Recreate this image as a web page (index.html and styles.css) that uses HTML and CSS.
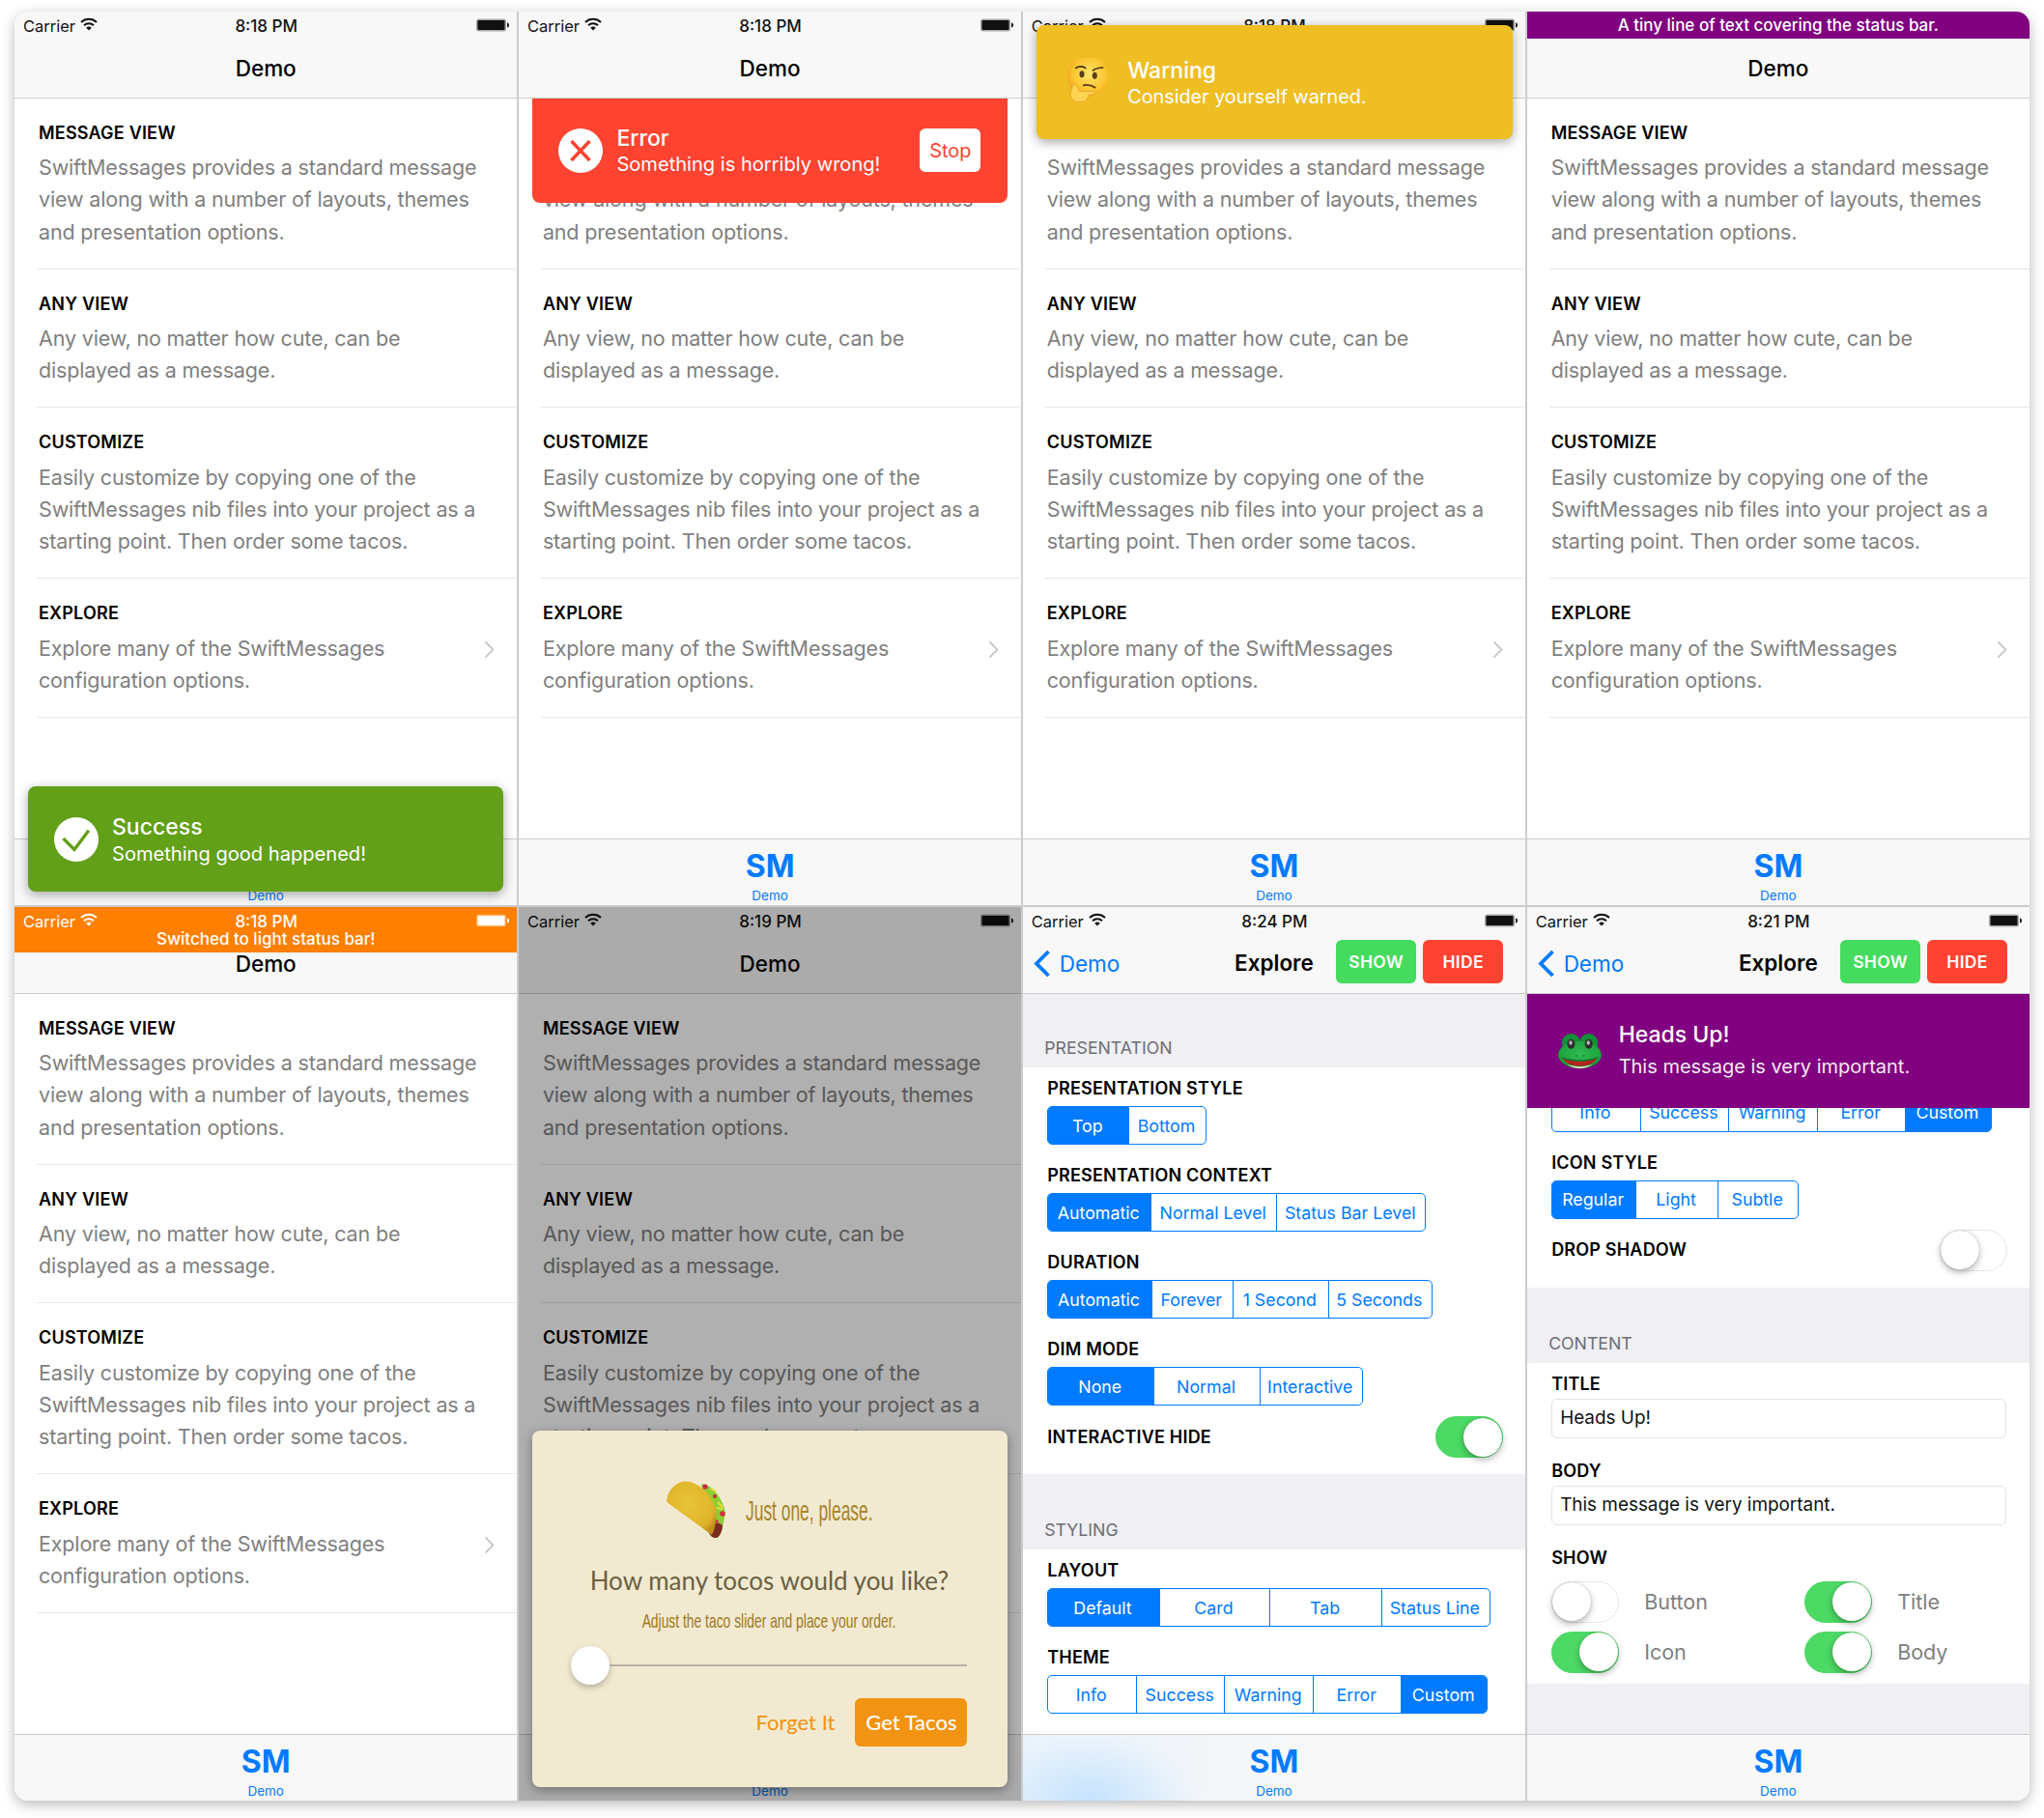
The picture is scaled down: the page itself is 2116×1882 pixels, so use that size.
FILE: index.html
```html
<!DOCTYPE html>
<html lang="en">
<head>
  <meta charset="UTF-8">
  <title>SwiftMessages</title>
  <link rel="stylesheet" href="styles.css">
</head>
<body>
  <svg class="defs" width="0" height="0">
    <symbol id="wifi" viewBox="0 0 18 14">
      <path d="M1 5a11.600 11.600 0 0 1 16 0" fill="none" stroke="currentColor" stroke-width="2"/>
      <path d="M4 8.200a7.400 7.400 0 0 1 10 0" fill="none" stroke="currentColor" stroke-width="2"/>
      <path d="M9 13.600 6.200 10.800a4 4 0 0 1 5.600 0z" fill="currentColor"/>
    </symbol>
    <symbol id="battery" viewBox="0 0 34 14">
      <rect x="0" y="0.500" width="31" height="13" rx="2.500" fill="currentColor" opacity=".35"/>
      <rect x="1.500" y="2" width="28" height="10" rx="1" fill="currentColor"/>
      <path d="M32 4.500c1.200 0 2 1 2 2.500s-.8 2.500-2 2.500z" fill="currentColor"/>
    </symbol>
    <symbol id="chevron" viewBox="0 0 11 19">
      <path d="M1.500 1.500 9.500 9.500l-8 8" fill="none" stroke="currentColor" stroke-width="1.800"/>
    </symbol>
    <symbol id="back" viewBox="0 0 18 29">
      <path d="M15.500 2 3 14.500 15.500 27" fill="none" stroke="currentColor" stroke-width="3.800"/>
    </symbol>
  </svg>

  <div class="window">

    <!-- success toast -->
    <article class="phone">
      <header class="status">
        <div class="status-left">Carrier <svg class="wifi"><use href="#wifi"/></svg></div>
        <div class="status-time">8:18 PM</div>
        <div class="status-right"><svg class="battery"><use href="#battery"/></svg></div>
      </header>
      <nav class="nav"><span class="nav-title">Demo</span></nav>
      <main class="home">
        <section class="row"><div><h3 class="row-title">MESSAGE VIEW</h3><p class="row-text">SwiftMessages provides a standard message<br>view along with a number of layouts, themes<br>and presentation options.</p></div></section>
        <section class="row"><div><h3 class="row-title">ANY VIEW</h3><p class="row-text">Any view, no matter how cute, can be<br>displayed as a message.</p></div></section>
        <section class="row"><div><h3 class="row-title">CUSTOMIZE</h3><p class="row-text">Easily customize by copying one of the<br>SwiftMessages nib files into your project as a<br>starting point. Then order some tacos.</p></div></section>
        <section class="row"><div><h3 class="row-title">EXPLORE</h3><p class="row-text">Explore many of the SwiftMessages<br>configuration options.</p></div><svg class="chevron"><use href="#chevron"/></svg></section>
      </main>
      <footer class="tab"><span class="tab-logo">SM</span><span class="tab-label">Demo</span></footer>
      <div class="toast toast-success">
        <svg class="toast-icon" viewBox="0 0 46 46"><circle cx="23" cy="23" r="23" fill="#fff"/><path d="M9.500 22 21 33.500 35.800 13.700" fill="none" stroke="#62a018" stroke-width="3.400"/></svg>
        <div><div class="toast-title">Success</div><div class="toast-body">Something good happened!</div></div>
      </div>
    </article>

    <!-- error toast -->
    <article class="phone">
      <header class="status">
        <div class="status-left">Carrier <svg class="wifi"><use href="#wifi"/></svg></div>
        <div class="status-time">8:18 PM</div>
        <div class="status-right"><svg class="battery"><use href="#battery"/></svg></div>
      </header>
      <nav class="nav"><span class="nav-title">Demo</span></nav>
      <main class="home">
        <section class="row"><div><h3 class="row-title">MESSAGE VIEW</h3><p class="row-text">SwiftMessages provides a standard message<br>view along with a number of layouts, themes<br>and presentation options.</p></div></section>
        <section class="row"><div><h3 class="row-title">ANY VIEW</h3><p class="row-text">Any view, no matter how cute, can be<br>displayed as a message.</p></div></section>
        <section class="row"><div><h3 class="row-title">CUSTOMIZE</h3><p class="row-text">Easily customize by copying one of the<br>SwiftMessages nib files into your project as a<br>starting point. Then order some tacos.</p></div></section>
        <section class="row"><div><h3 class="row-title">EXPLORE</h3><p class="row-text">Explore many of the SwiftMessages<br>configuration options.</p></div><svg class="chevron"><use href="#chevron"/></svg></section>
      </main>
      <footer class="tab"><span class="tab-logo">SM</span><span class="tab-label">Demo</span></footer>
      <div class="toast toast-error">
        <svg class="toast-icon" viewBox="0 0 46 46"><circle cx="23" cy="23" r="23" fill="#fff"/><path d="M13.500 13 32.500 33M32.500 13 13.500 33" fill="none" stroke="#fe4331" stroke-width="3.600"/></svg>
        <div class="toast-text"><div class="toast-title">Error</div><div class="toast-body">Something is horribly wrong!</div></div>
        <button class="toast-btn">Stop</button>
      </div>
    </article>

    <!-- warning toast -->
    <article class="phone">
      <header class="status">
        <div class="status-left">Carrier <svg class="wifi"><use href="#wifi"/></svg></div>
        <div class="status-time">8:18 PM</div>
        <div class="status-right"><svg class="battery"><use href="#battery"/></svg></div>
      </header>
      <nav class="nav"><span class="nav-title">Demo</span></nav>
      <main class="home">
        <section class="row"><div><h3 class="row-title">MESSAGE VIEW</h3><p class="row-text">SwiftMessages provides a standard message<br>view along with a number of layouts, themes<br>and presentation options.</p></div></section>
        <section class="row"><div><h3 class="row-title">ANY VIEW</h3><p class="row-text">Any view, no matter how cute, can be<br>displayed as a message.</p></div></section>
        <section class="row"><div><h3 class="row-title">CUSTOMIZE</h3><p class="row-text">Easily customize by copying one of the<br>SwiftMessages nib files into your project as a<br>starting point. Then order some tacos.</p></div></section>
        <section class="row"><div><h3 class="row-title">EXPLORE</h3><p class="row-text">Explore many of the SwiftMessages<br>configuration options.</p></div><svg class="chevron"><use href="#chevron"/></svg></section>
      </main>
      <footer class="tab"><span class="tab-logo">SM</span><span class="tab-label">Demo</span></footer>
      <div class="toast toast-warning">
        <svg class="emoji-think" viewBox="0 0 42 46">
          <defs><radialGradient id="faceFill" cx=".55" cy=".45" r=".6"><stop offset="0" stop-color="#ffe46a"/><stop offset=".7" stop-color="#fbc52f"/><stop offset="1" stop-color="#f4a020"/></radialGradient></defs>
          <circle cx="20.800" cy="19" r="20.800" fill="url(#faceFill)"/>
          <ellipse cx="15" cy="16.700" rx="2.500" ry="3.500" fill="#5a3d1e"/>
          <ellipse cx="28.300" cy="18.300" rx="2.500" ry="3.500" fill="#5a3d1e"/>
          <path d="M8.300 11C10 8.800 16 7.500 19.300 11M26 13.300c2-1.800 7-3.300 11.300-3.300" fill="none" stroke="#4a3318" stroke-width="1.700"/>
          <path d="M16 28.300c4.500-.8 10 .4 13.300 2.700" fill="none" stroke="#5a3d1e" stroke-width="1.800"/>
          <path d="M5.500 28c1.500-1.500 3.500-1 4.500 1l2.500 5.500h14c2 0 2.500 2.500.5 3L21 39c1 1 .5 3-1 3 0 2-1 3-2.500 3C12 46.500 4 46 3 39c-.5-3 2-6 2.500-11z" fill="#ffd452" stroke="#eb9a22" stroke-width=".8"/>
        </svg>
        <div><div class="toast-title">Warning</div><div class="toast-body">Consider yourself warned.</div></div>
      </div>
    </article>

    <!-- status line -->
    <article class="phone">
      <header class="status-line">A tiny line of text covering the status bar.</header>
      <nav class="nav"><span class="nav-title">Demo</span></nav>
      <main class="home">
        <section class="row"><div><h3 class="row-title">MESSAGE VIEW</h3><p class="row-text">SwiftMessages provides a standard message<br>view along with a number of layouts, themes<br>and presentation options.</p></div></section>
        <section class="row"><div><h3 class="row-title">ANY VIEW</h3><p class="row-text">Any view, no matter how cute, can be<br>displayed as a message.</p></div></section>
        <section class="row"><div><h3 class="row-title">CUSTOMIZE</h3><p class="row-text">Easily customize by copying one of the<br>SwiftMessages nib files into your project as a<br>starting point. Then order some tacos.</p></div></section>
        <section class="row"><div><h3 class="row-title">EXPLORE</h3><p class="row-text">Explore many of the SwiftMessages<br>configuration options.</p></div><svg class="chevron"><use href="#chevron"/></svg></section>
      </main>
      <footer class="tab"><span class="tab-logo">SM</span><span class="tab-label">Demo</span></footer>
    </article>

    <!-- light status bar -->
    <article class="phone">
      <div class="light-bar">
        <header class="status">
          <div class="status-left">Carrier <svg class="wifi"><use href="#wifi"/></svg></div>
          <div class="status-time">8:18 PM</div>
          <div class="status-right"><svg class="battery"><use href="#battery"/></svg></div>
        </header>
        <div class="light-text">Switched to light status bar!</div>
      </div>
      <nav class="nav nav-short"><span class="nav-title">Demo</span></nav>
      <main class="home">
        <section class="row"><div><h3 class="row-title">MESSAGE VIEW</h3><p class="row-text">SwiftMessages provides a standard message<br>view along with a number of layouts, themes<br>and presentation options.</p></div></section>
        <section class="row"><div><h3 class="row-title">ANY VIEW</h3><p class="row-text">Any view, no matter how cute, can be<br>displayed as a message.</p></div></section>
        <section class="row"><div><h3 class="row-title">CUSTOMIZE</h3><p class="row-text">Easily customize by copying one of the<br>SwiftMessages nib files into your project as a<br>starting point. Then order some tacos.</p></div></section>
        <section class="row"><div><h3 class="row-title">EXPLORE</h3><p class="row-text">Explore many of the SwiftMessages<br>configuration options.</p></div><svg class="chevron"><use href="#chevron"/></svg></section>
      </main>
      <footer class="tab"><span class="tab-logo">SM</span><span class="tab-label">Demo</span></footer>
    </article>

    <!-- dimmed taco dialog -->
    <article class="phone">
      <header class="status">
        <div class="status-left">Carrier <svg class="wifi"><use href="#wifi"/></svg></div>
        <div class="status-time">8:19 PM</div>
        <div class="status-right"><svg class="battery"><use href="#battery"/></svg></div>
      </header>
      <nav class="nav"><span class="nav-title">Demo</span></nav>
      <main class="home">
        <section class="row"><div><h3 class="row-title">MESSAGE VIEW</h3><p class="row-text">SwiftMessages provides a standard message<br>view along with a number of layouts, themes<br>and presentation options.</p></div></section>
        <section class="row"><div><h3 class="row-title">ANY VIEW</h3><p class="row-text">Any view, no matter how cute, can be<br>displayed as a message.</p></div></section>
        <section class="row"><div><h3 class="row-title">CUSTOMIZE</h3><p class="row-text">Easily customize by copying one of the<br>SwiftMessages nib files into your project as a<br>starting point. Then order some tacos.</p></div></section>
        <section class="row"><div><h3 class="row-title">EXPLORE</h3><p class="row-text">Explore many of the SwiftMessages<br>configuration options.</p></div><svg class="chevron"><use href="#chevron"/></svg></section>
      </main>
      <footer class="tab"><span class="tab-logo">SM</span><span class="tab-label">Demo</span></footer>
      <div class="dim"></div>
      <div class="dialog">
        <div class="dialog-head">
          <svg class="taco" viewBox="0 0 61 60">
            <defs><radialGradient id="shellFill" cx=".45" cy=".4" r=".65"><stop offset="0" stop-color="#e9c438"/><stop offset=".8" stop-color="#deb32a"/><stop offset="1" stop-color="#c18f1c"/></radialGradient></defs>
            <path d="M36 3c8 1 14 6 18 13 4 6 7 13 6.500 19-.5 5-2 10-2.500 13-1 5-4 11-7 11-2 0-5-2-6-5z" fill="#8ccf35"/>
            <path d="M50 44c3-1 6 0 8 2 0 5-3 13-7 13-3 0-6-2-7-5z" fill="#7a2e20"/>
            <circle cx="40" cy="6" r="2.600" fill="#c8283a"/>
            <circle cx="50" cy="16" r="2" fill="#c8283a"/>
            <circle cx="58" cy="34" r="2.800" fill="#d62d3d"/>
            <circle cx="52" cy="42" r="1.800" fill="#d62d3d"/>
            <path d="M45 8l6 3M53 22l5 5M52 28l6 1" stroke="#f0d93a" stroke-width="1.800"/>
            <path d="M.3 19C2 9 10 1 19 .5 32 0 48 14 51 30c1 8 0 18-4 26L3 24c-2-1-3-3-2.700-5z" fill="url(#shellFill)"/>
          </svg>
          <span class="dialog-tag"><span class="dialog-tag-text">Just one, please.</span></span>
        </div>
        <h2 class="dialog-question">How many tocos would you like?</h2>
        <p class="dialog-hint">Adjust the taco slider and place your order.</p>
        <div class="slider"><span class="slider-thumb"></span><span class="slider-track"></span></div>
        <div class="dialog-actions"><span class="dialog-skip">Forget It</span><button class="dialog-go">Get Tacos</button></div>
      </div>
    </article>

    <!-- explore, top of the form -->
    <article class="phone">
      <header class="status">
        <div class="status-left">Carrier <svg class="wifi"><use href="#wifi"/></svg></div>
        <div class="status-time">8:24 PM</div>
        <div class="status-right"><svg class="battery"><use href="#battery"/></svg></div>
      </header>
      <nav class="nav nav-explore">
        <a class="nav-back"><svg class="back"><use href="#back"/></svg>Demo</a>
        <span class="nav-title nav-title-center">Explore</span>
        <div class="nav-actions"><button class="nav-btn nav-show">SHOW</button><button class="nav-btn nav-hide">HIDE</button></div>
      </nav>
      <main class="form">
        <h4 class="form-section">PRESENTATION</h4>
        <div class="form-group">
          <div class="field"><h3 class="field-label">PRESENTATION STYLE</h3>
            <div class="seg seg-style"><span class="seg-on">Top</span><span>Bottom</span></div></div>
          <div class="field"><h3 class="field-label">PRESENTATION CONTEXT</h3>
            <div class="seg seg-context"><span class="seg-on">Automatic</span><span>Normal Level</span><span>Status Bar Level</span></div></div>
          <div class="field"><h3 class="field-label">DURATION</h3>
            <div class="seg seg-duration"><span class="seg-on">Automatic</span><span>Forever</span><span>1 Second</span><span>5 Seconds</span></div></div>
          <div class="field field-tight"><h3 class="field-label">DIM MODE</h3>
            <div class="seg seg-dim"><span class="seg-on">None</span><span>Normal</span><span>Interactive</span></div></div>
          <div class="toggle-row"><h3 class="field-label">INTERACTIVE HIDE</h3><span class="switch switch-on"><i></i></span></div>
        </div>
        <h4 class="form-section form-section-next">STYLING</h4>
        <div class="form-group form-group-fill">
          <div class="field"><h3 class="field-label">LAYOUT</h3>
            <div class="seg seg-layout"><span class="seg-on">Default</span><span>Card</span><span>Tab</span><span>Status Line</span></div></div>
          <div class="field"><h3 class="field-label">THEME</h3>
            <div class="seg seg-theme"><span>Info</span><span>Success</span><span>Warning</span><span>Error</span><span class="seg-on">Custom</span></div></div>
        </div>
      </main>
      <footer class="tab tab-glow"><span class="tab-logo">SM</span><span class="tab-label">Demo</span></footer>
    </article>

    <!-- explore, scrolled, custom message -->
    <article class="phone">
      <header class="status">
        <div class="status-left">Carrier <svg class="wifi"><use href="#wifi"/></svg></div>
        <div class="status-time">8:21 PM</div>
        <div class="status-right"><svg class="battery"><use href="#battery"/></svg></div>
      </header>
      <nav class="nav nav-explore">
        <a class="nav-back"><svg class="back"><use href="#back"/></svg>Demo</a>
        <span class="nav-title nav-title-center">Explore</span>
        <div class="nav-actions"><button class="nav-btn nav-show">SHOW</button><button class="nav-btn nav-hide">HIDE</button></div>
      </nav>
      <main class="form">
        <div class="form-group form-group-scrolled">
          <div class="field"><div class="seg seg-theme-2"><span>Info</span><span>Success</span><span>Warning</span><span>Error</span><span class="seg-on">Custom</span></div></div>
          <div class="field field-tight"><h3 class="field-label">ICON STYLE</h3>
            <div class="seg seg-icon"><span class="seg-on">Regular</span><span>Light</span><span>Subtle</span></div></div>
          <div class="toggle-row"><h3 class="field-label">DROP SHADOW</h3><span class="switch"><i></i></span></div>
        </div>
        <h4 class="form-section form-section-next">CONTENT</h4>
        <div class="form-group form-group-content">
          <div class="field-input"><h3 class="field-label">TITLE</h3><div class="input">Heads Up!</div></div>
          <div class="field-input"><h3 class="field-label">BODY</h3><div class="input">This message is very important.</div></div>
          <h3 class="field-label field-label-show">SHOW</h3>
          <div class="toggle-grid">
            <div class="toggle"><span class="switch"><i></i></span>Button</div>
            <div class="toggle"><span class="switch switch-on"><i></i></span>Title</div>
            <div class="toggle"><span class="switch switch-on"><i></i></span>Icon</div>
            <div class="toggle"><span class="switch switch-on"><i></i></span>Body</div>
          </div>
        </div>
      </main>
      <footer class="tab"><span class="tab-logo">SM</span><span class="tab-label">Demo</span></footer>
      <div class="toast toast-custom">
        <svg class="emoji-frog" viewBox="0 0 45 36">
          <defs><radialGradient id="frogFill" cx=".5" cy=".45" r=".6"><stop offset="0" stop-color="#32bb52"/><stop offset=".75" stop-color="#1da53e"/><stop offset="1" stop-color="#0d7a30"/></radialGradient></defs>
          <circle cx="13.400" cy="9.500" r="9.500" fill="#129036"/>
          <circle cx="31.700" cy="9.500" r="9.500" fill="#129036"/>
          <ellipse cx="22.500" cy="22" rx="22.500" ry="14" fill="url(#frogFill)"/>
          <ellipse cx="13.400" cy="10.700" rx="4" ry="5" fill="#2e2e2e"/>
          <ellipse cx="31.700" cy="10.700" rx="4" ry="5" fill="#2e2e2e"/>
          <ellipse cx="13" cy="9.500" rx="1.700" ry="2.200" fill="#b5b5b5"/>
          <ellipse cx="31.300" cy="9.500" rx="1.700" ry="2.200" fill="#b5b5b5"/>
          <circle cx="19" cy="23" r=".8" fill="#0a6a28"/>
          <circle cx="26.500" cy="23" r=".8" fill="#0a6a28"/>
          <path d="M5 26c11 3.500 24 3.500 35 0-3 5-9 7.500-17.500 7.500S8 31 5 26z" fill="#b3231c"/>
          <path d="M4 25c12 4 25 4 37 0" fill="none" stroke="#0a5a22" stroke-width="1"/>
          <path d="M9 31.500c8 3.500 19 3.500 27 0-4 3-9 4.500-13.500 4.500S13 34.500 9 31.500z" fill="#dfe8c0"/>
        </svg>
        <div><div class="toast-title">Heads Up!</div><div class="toast-body">This message is very important.</div></div>
      </div>
    </article>

  </div>
</body>
</html>
```

FILE: styles.css
```css
* {
  box-sizing: border-box;
}

html, body {
  margin: 0;
  height: 100%;
  background: #fff;
}

body {
  padding: 12px 15px 18px;
  font-family: Inter, "Noto Sans", sans-serif;
  overflow: hidden;
}

h2, h3, h4, p {
  margin: 0;
}

button {
  font-family: inherit;
  border: none;
  padding: 0;
}

.defs {
  position: absolute;
}

.window {
  display: grid;
  grid-template-columns: repeat(4, 1fr);
  grid-template-rows: repeat(2, 925px);
  gap: 2px 1.5px;
  background: #ccc;
  border-radius: 14px;
  overflow: hidden;
  box-shadow: 0 4px 14px rgba(0, 0, 0, 0.28);
}

.phone {
  position: relative;
  display: flex;
  flex-direction: column;
  min-width: 0;
  background: #fff;
  overflow: hidden;
}

/* status bar */
.status {
  display: grid;
  grid-template-columns: 1fr auto 1fr;
  align-items: center;
  height: 28px;
  flex: none;
  padding: 1px 8px 0 9px;
  font-size: 17px;
  color: #111;
  background: #f8f8f8;
}

.status-left {
  display: flex;
  align-items: center;
  gap: 5px;
  font-size: 16.5px;
}

.status-time {
  font-weight: 500;
}

.status-right {
  display: flex;
  justify-content: flex-end;
}

.wifi {
  width: 18px;
  height: 14px;
  margin-top: -4px;
}

.battery {
  width: 34px;
  height: 14px;
  margin-top: -1px;
}

.status-line {
  height: 28px;
  flex: none;
  line-height: 29px;
  text-align: center;
  font-size: 17px;
  font-weight: 500;
  color: #fff;
  background: #800080;
}

.light-bar {
  height: 47px;
  flex: none;
  background: #ff7f00;
}

.light-bar .status {
  background: transparent;
  color: #fff;
}

.light-text {
  margin-top: -4px;
  line-height: 19px;
  text-align: center;
  font-size: 17px;
  font-weight: 500;
  color: #fff;
}

/* nav bar */
.nav {
  display: flex;
  align-items: center;
  justify-content: center;
  height: 61.5px;
  flex: none;
  padding-top: 1px;
  background: #f8f8f8;
  border-bottom: 1.5px solid #ccc;
}

.nav-short {
  height: 42.5px;
  padding-top: 0;
  align-items: flex-start;
}

.nav-title {
  font-size: 22.5px;
  font-weight: 500;
  line-height: 24px;
  color: #000;
}

.nav-explore {
  position: relative;
  justify-content: space-between;
  padding: 0 23px 0 11px;
}

.nav-title-center {
  position: absolute;
  left: 0;
  right: 0;
  text-align: center;
  font-weight: 600;
}

.nav-back {
  display: flex;
  align-items: center;
  gap: 9px;
  font-size: 22.5px;
  color: #007aff;
}

.back {
  width: 18px;
  height: 29px;
}

.nav-actions {
  position: relative;
  display: flex;
  gap: 7px;
  margin-top: -3px;
}

.nav-btn {
  width: 83px;
  height: 45px;
  border-radius: 6px;
  font-size: 17.5px;
  font-weight: 600;
  letter-spacing: 0.3px;
  color: #fff;
}

.nav-show {
  background: #44db5e;
}

.nav-hide {
  background: #ff4332;
}

/* home list */
.home {
  flex: 1;
  min-height: 0;
}

.row {
  display: flex;
  align-items: center;
  justify-content: space-between;
  margin-left: 23px;
  padding: 24px 23px 20.7px 2px;
  border-bottom: 1.5px solid #e7e7e7;
}

.row-title {
  margin-bottom: 7.5px;
  font-size: 18px;
  line-height: 24px;
  font-weight: 600;
  letter-spacing: 0.2px;
  color: #000;
}

.row-text {
  font-size: 21.5px;
  line-height: 33.3px;
  letter-spacing: -0.16px;
  color: #808080;
}

.chevron {
  width: 11px;
  height: 19px;
  color: #c7c7cc;
}

/* tab bar */
.tab {
  display: flex;
  flex-direction: column;
  align-items: center;
  height: 69.5px;
  flex: none;
  padding-top: 10px;
  background: #f8f8f8;
  border-top: 1.5px solid #ccc;
}

.tab-logo {
  font-size: 32px;
  line-height: 36px;
  font-weight: 700;
  color: #007aff;
}

.tab-label {
  margin-top: 3px;
  font-size: 13.5px;
  line-height: 18px;
  color: #007aff;
}

.tab-glow {
  background:
    radial-gradient(ellipse 110px 70px at 70px 100%, #c5e3fd, rgba(197, 227, 253, 0) 100%),
    linear-gradient(90deg, #eaf3fc, #f8f8f8 62%);
}

/* toasts */
.toast {
  position: absolute;
  display: flex;
  align-items: center;
  color: #fff;
  box-shadow: 0 3px 12px rgba(0, 0, 0, 0.35);
  border-radius: 8px;
}

.toast-icon {
  width: 46px;
  height: 46px;
  flex: none;
  margin-right: 14px;
}

.toast-title {
  font-size: 23px;
  line-height: 24px;
  font-weight: 500;
}

.toast-body {
  margin-top: 3.5px;
  font-size: 20.1px;
  line-height: 24px;
}

.toast-success {
  top: 802px;
  left: 14px;
  width: 492px;
  height: 109px;
  padding: 0 0 0 27px;
  background: #62a018;
}

.toast-success > div {
  padding-top: 3px;
}

.toast-error {
  top: 89.5px;
  left: 14.5px;
  width: 492px;
  height: 108.5px;
  padding: 0 28px 0 27px;
  background: #fe4331;
  border-radius: 0 0 8px 8px;
  box-shadow: none;
}

.toast-text {
  flex: 1;
  padding-top: 1px;
}

.toast-btn {
  width: 63px;
  height: 45px;
  border-radius: 6px;
  font-size: 20px;
  color: #fe4331;
  background: #fff;
}

.toast-warning {
  top: 14px;
  left: 14.5px;
  width: 493px;
  height: 118px;
  padding-left: 32px;
  background: #efbe23;
}

.toast-warning > div {
  padding-top: 3px;
}

.toast-warning .toast-body {
  font-size: 19.8px;
}

.emoji-think {
  width: 42px;
  height: 46px;
  flex: none;
  margin: -5px 20px 0 0;
}

.toast-custom {
  top: 89.5px;
  left: 0;
  right: 0;
  height: 118px;
  padding-left: 32px;
  background: #800080;
  border-radius: 0;
  box-shadow: none;
}

.emoji-frog {
  width: 45px;
  height: 36px;
  flex: none;
  margin-right: 18px;
}

.toast-custom .toast-body {
  margin-top: 9.5px;
  font-size: 20px;
  opacity: 0.92;
}

/* dim + taco dialog */
.dim {
  position: absolute;
  inset: 0;
  background: rgba(0, 0, 0, 0.31);
}

.dialog {
  position: absolute;
  top: 541.5px;
  left: 14.5px;
  width: 492px;
  height: 369px;
  padding: 52px 42px 0 40px;
  background: #f2ead0;
  border-radius: 8px;
  box-shadow: 0 3px 12px rgba(0, 0, 0, 0.35);
  text-align: center;
  font-family: Lato, sans-serif;
}

.dialog-head {
  display: flex;
  align-items: center;
  justify-content: center;
  gap: 21px;
  height: 60px;
}

.taco {
  width: 61px;
  height: 60px;
}

/* no condensed font here, the text gets squeezed instead */
.dialog-tag {
  display: block;
  width: 130px;
  padding-top: 3px;
  text-align: left;
  white-space: nowrap;
}

.dialog-tag-text {
  display: inline-block;
  font-family: "Liberation Sans", sans-serif;
  font-size: 29px;
  color: #a8832a;
  transform: scaleX(0.6);
  transform-origin: left center;
}

.dialog-question {
  margin-top: 26px;
  font-size: 26px;
  line-height: 34px;
  font-weight: 400;
  color: #6b6043;
}

.dialog-hint {
  margin-top: 12px;
  white-space: nowrap;
  font-family: "Liberation Sans", sans-serif;
  font-size: 21px;
  line-height: 26px;
  color: #a0771f;
  transform: scaleX(0.66);
}

.slider {
  display: flex;
  align-items: center;
  height: 40px;
  margin-top: 13.5px;
}

.slider-thumb {
  width: 40px;
  height: 40px;
  flex: none;
  border-radius: 50%;
  background: #fff;
  box-shadow: 0 3px 6px rgba(0, 0, 0, 0.25);
}

.slider-track {
  flex: 1;
  height: 2.5px;
  background: #b5b2a8;
}

.dialog-actions {
  display: flex;
  align-items: center;
  justify-content: flex-end;
  gap: 21px;
  margin-top: 13.5px;
}

.dialog-skip {
  font-size: 22px;
  color: #f19214;
}

.dialog-go {
  width: 116px;
  height: 50px;
  border-radius: 6px;
  font-family: Lato, sans-serif;
  font-size: 22px;
  font-weight: 500;
  color: #fff;
  background: #f29313;
}

/* explore form */
.form {
  flex: 1;
  min-height: 0;
  display: flex;
  flex-direction: column;
  background: #efeff4;
}

.form-section {
  height: 76.5px;
  padding: 44.5px 0 0 22.5px;
  font-size: 17.7px;
  line-height: 24px;
  font-weight: 400;
  color: #6d6d72;
}

.form-section-next {
  height: 78px;
  flex: none;
  padding-top: 46px;
}

.form-group {
  flex: none;
  padding: 10px 24px 17px 25.5px;
  background: #fff;
}

.form-group-fill {
  flex: 1;
  min-height: 0;
  padding-bottom: 0;
}

.form-group-fill .field:last-child {
  margin-bottom: 0;
}

.form-group-scrolled {
  padding-top: 103px;
}

.form-group-content {
  padding-bottom: 11px;
}

.field {
  margin-bottom: 20px;
}

.field-tight {
  margin-bottom: 11px;
}

.field-label {
  font-size: 18px;
  line-height: 24px;
  font-weight: 600;
  letter-spacing: 0.2px;
  color: #000;
}

.field .field-label {
  margin-bottom: 6px;
}

.field-input {
  margin-bottom: 21.5px;
}

.field-input .field-label {
  margin-bottom: 3.5px;
}

.field-label-show {
  margin-bottom: 12px;
}

.input {
  height: 41px;
  padding-left: 8px;
  line-height: 38px;
  font-size: 18.9px;
  color: #111;
  border: 1.5px solid #e2e2e2;
  border-radius: 6px;
}

.seg {
  display: grid;
  height: 40px;
  overflow: hidden;
  border: 1.5px solid #007aff;
  border-radius: 5px;
}

.seg span {
  display: flex;
  align-items: center;
  justify-content: center;
  padding-right: 2px;
  font-size: 17.8px;
  color: #007aff;
  border-left: 1.5px solid #007aff;
}

.seg span:first-child {
  border-left: none;
}

.seg .seg-on {
  color: #fff;
  background: #007aff;
}

.seg-style {
  width: 164.5px;
  grid-template-columns: 83px 1fr;
}

.seg-context {
  width: 392px;
  grid-template-columns: 106px 130px 1fr;
}

.seg-duration {
  width: 398.5px;
  grid-template-columns: 106.5px 84px 99px 1fr;
}

.seg-dim {
  width: 326.5px;
  grid-template-columns: 109px 109.5px 1fr;
}

.seg-layout {
  width: 458.5px;
  grid-template-columns: 114.5px 114.5px 115.5px 1fr;
}

.seg-theme {
  width: 456px;
  grid-template-columns: 91px 91px 92px 91px 1fr;
}

.seg-theme-2 {
  width: 455.5px;
  grid-template-columns: 90.5px 91.5px 92px 91px 1fr;
}

.seg-icon {
  width: 256px;
  grid-template-columns: 86px 85px 1fr;
}

.toggle-row {
  display: flex;
  align-items: center;
  justify-content: space-between;
  margin-right: -1px;
}

.switch {
  display: flex;
  align-items: center;
  width: 70px;
  height: 43px;
  flex: none;
  padding: 0 1.5px;
  background: #fff;
  border: 1.5px solid #e6e6e6;
  border-radius: 22px;
}

.switch i {
  width: 40px;
  height: 40px;
  margin-left: -1.5px;
  border-radius: 50%;
  background: #fff;
  box-shadow: 0 3px 7px rgba(0, 0, 0, 0.3), 0 0 1px rgba(0, 0, 0, 0.3);
}

.switch-on {
  justify-content: flex-end;
  background: #4cd964;
  border-color: #4cd964;
}

.switch-on i {
  margin: 0 -1.5px 0 0;
}

.toggle-grid {
  display: grid;
  grid-template-columns: 262px 1fr;
  row-gap: 9px;
}

.toggle {
  display: flex;
  align-items: center;
  gap: 26px;
  font-size: 21.5px;
  color: #808080;
}
```
